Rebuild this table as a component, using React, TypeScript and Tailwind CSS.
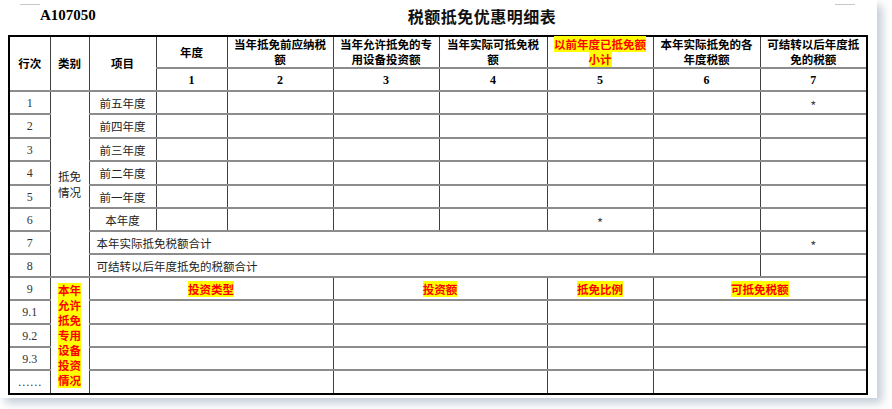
import React from "react";

const cjk = "font-['Noto_Sans_CJK_SC',sans-serif]";
const serif = "font-['Liberation_Serif','Noto_Sans_CJK_SC',serif]";
const td = "border-x border-x-[#3f3f3f] border-y-2 border-y-[#8c8c8c] p-0 text-center align-middle";
const hl = "bg-[#ffff00] text-[#ff0000] font-bold";

const years = ["前五年度", "前四年度", "前三年度", "前二年度", "前一年度", "本年度"];
const rowH = [
  "h-[23px]", "h-[24px]", "h-[23px]", "h-[24px]", "h-[23px]", "h-[23px]",
  "h-[23px]", "h-[23px]", "h-[23px]", "h-[24px]", "h-[23px]", "h-[23px]", "h-[23px]",
];

function Star() {
  return <span className="inline-block translate-y-[3px] text-[13px] leading-[10px] text-[#444]">*</span>;
}

function Num({ n }: { n: string }) {
  return <td className={`${td} ${serif} text-[12px] text-[#333]`}>{n}</td>;
}

export default function App() {
  return (
    <div className={`w-[892px] h-[409px] bg-white ${cjk}`}>
      <div className="w-[877px] h-[398px] bg-white shadow-[5px_5px_9px_rgba(120,140,165,0.45)] flex flex-col">
        {/* corner marks */}
        <div className="flex justify-between pl-[20px] pr-[22px] pt-[4px]">
          <div className="w-[20px] h-px bg-[#c8c8c8]" />
          <div className="w-[20px] h-px bg-[#c8c8c8]" />
        </div>

        {/* title */}
        <div className="h-[21px] flex items-center">
          <span className={`ml-[40px] ${serif} font-bold text-[15px] text-black`}>A107050</span>
          <span className="ml-[312px] text-[16px] font-bold text-[#111] tracking-[0.5px]">税额抵免优惠明细表</span>
        </div>

        <div className="mt-[9px] ml-[8px] w-[860px] border-2 border-black">
          <table className="table-fixed border-collapse border-hidden w-[856px] text-[11.5px] leading-[16px] text-[#222]">
            <colgroup>
              <col className="w-[40px]" />
              <col className="w-[39px]" />
              <col className="w-[67px]" />
              <col className="w-[71px]" />
              <col className="w-[106px]" />
              <col className="w-[106px]" />
              <col className="w-[108px]" />
              <col className="w-[106px]" />
              <col className="w-[107px]" />
              <col className="w-[106px]" />
            </colgroup>
            <tbody>
              <tr className="h-[30px] font-bold text-black leading-[15px]">
                <td className={td} rowSpan={2}>行次</td>
                <td className={td} rowSpan={2}>类别</td>
                <td className={td} rowSpan={2}>项目</td>
                <td className={td}>年度</td>
                <td className={`${td} px-1`}>当年抵免前应纳税额</td>
                <td className={`${td} px-1`}>当年允许抵免的专用设备投资额</td>
                <td className={`${td} px-1`}>当年实际可抵免税额</td>
                <td className={`${td} px-1`}>
                  <span className={hl}>以前年度已抵免额</span>
                  <br />
                  <span className={hl}>小计</span>
                </td>
                <td className={`${td} px-1`}>本年实际抵免的各年度税额</td>
                <td className={`${td} px-1`}>可结转以后年度抵免的税额</td>
              </tr>
              <tr className={`h-[23px] font-bold text-black ${serif} text-[12px]`}>
                <td className={td}>1</td>
                <td className={td}>2</td>
                <td className={td}>3</td>
                <td className={td}>4</td>
                <td className={td}>5</td>
                <td className={td}>6</td>
                <td className={td}>7</td>
              </tr>

              {years.map((y, i) => (
                <tr key={y} className={rowH[i]}>
                  <Num n={String(i + 1)} />
                  {i === 0 && (
                    <td className={td} rowSpan={8}>
                      抵免
                      <br />
                      情况
                    </td>
                  )}
                  <td className={td}>{y}</td>
                  <td className={td} />
                  <td className={td} />
                  <td className={td} />
                  <td className={td} />
                  <td className={td}>{i === 5 && <Star />}</td>
                  <td className={td} />
                  <td className={td}>{i === 0 && <Star />}</td>
                </tr>
              ))}

              <tr className={rowH[6]}>
                <Num n="7" />
                <td className={`${td} text-left pl-[7px]`} colSpan={6}>本年实际抵免税额合计</td>
                <td className={td} />
                <td className={td}><Star /></td>
              </tr>
              <tr className={rowH[7]}>
                <Num n="8" />
                <td className={`${td} text-left pl-[7px]`} colSpan={7}>可结转以后年度抵免的税额合计</td>
                <td className={td} />
              </tr>

              <tr className={rowH[8]}>
                <Num n="9" />
                <td className={td} rowSpan={5}>
                  <div className={`mx-auto w-[23px] leading-[15px] text-[11.5px] ${hl}`}>
                    本年允许抵免专用设备投资情况
                  </div>
                </td>
                <td className={td} colSpan={3}><span className={hl}>投资类型</span></td>
                <td className={td} colSpan={2}><span className={hl}>投资额</span></td>
                <td className={td}><span className={hl}>抵免比例</span></td>
                <td className={td} colSpan={2}><span className={hl}>可抵免税额</span></td>
              </tr>
              {["9.1", "9.2", "9.3", "……"].map((n, i) => (
                <tr key={n} className={rowH[9 + i]}>
                  <Num n={n} />
                  <td className={td} colSpan={3} />
                  <td className={td} colSpan={2} />
                  <td className={td} />
                  <td className={td} colSpan={2} />
                </tr>
              ))}
            </tbody>
          </table>
        </div>
      </div>
    </div>
  );
}
